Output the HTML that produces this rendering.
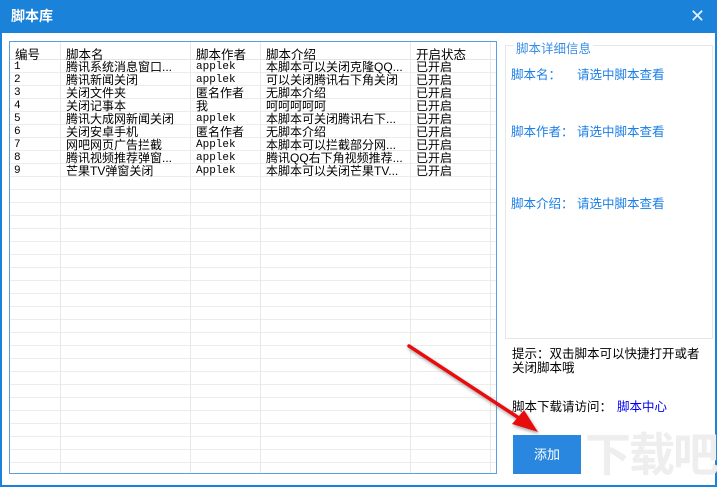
<!DOCTYPE html>
<html><head><meta charset="utf-8"><style>
*{margin:0;padding:0;box-sizing:border-box}
body{width:717px;height:487px;overflow:hidden;background:#fff;font-family:"Liberation Sans","Noto Sans CJK SC",sans-serif;position:relative}
.title{position:absolute;left:0;top:0;width:717px;height:33px;background:#1a82d9;color:#fff;font-size:14px;font-weight:bold;line-height:33px;padding-left:11px}
.close{position:absolute;right:12px;top:8px;color:#e6f0fa;font-size:18px;line-height:16px}
.lb{position:absolute;left:0;top:33px;width:2px;height:454px;background:#1a82d9}
.rb{position:absolute;right:0;top:33px;width:2px;height:454px;background:#1a82d9}
.bb{position:absolute;left:0;top:485px;width:717px;height:2px;background:#1a82d9}
.tbl{position:absolute;left:9px;top:41px;width:488px;height:433px;border:1px solid #5a9fe6;overflow:hidden;
 background-image:repeating-linear-gradient(to bottom,transparent 0,transparent 12px,#ececec 12px,#ececec 13px);background-position:0 5px}
.hdr{position:absolute;left:0;top:0;width:100%;height:18px;background:#fff;border-bottom:1px solid #e4e4e4}
.vl{position:absolute;top:0;width:1px;height:433px;background:#e8e8e8}
.r{position:absolute;left:0;width:100%;height:13px}
.c{position:absolute;top:0;font-size:12px;line-height:13px;color:#000;white-space:nowrap}
.h{top:2px;font-size:12.5px;position:absolute}
.m{font-family:"Liberation Mono","Noto Sans CJK SC",monospace;font-size:11px}
.grp{position:absolute;left:505px;top:45px;width:208px;height:294px;border:1px solid #e6e6e6}
.gt{position:absolute;left:514px;top:38px;background:#fff;color:#3a8ee6;font-size:12.5px;padding:0 2px}
.bl{position:absolute;color:#1a7fe6;font-size:12.5px}
.k{position:absolute;color:#000;font-size:12.5px;line-height:14px}
.btn{position:absolute;left:513px;top:435px;width:68px;height:39px;background:#2a87e0;color:#fff;font-size:13px;text-align:center;line-height:39px}
</style></head><body>
<div class="title">脚本库</div>
<div class="close">✕</div>
<div class="lb"></div><div class="rb"></div><div class="bb"></div>
<div class="tbl">
<div class="hdr"></div>
<div class="vl" style="left:50px"></div>
<div class="vl" style="left:180px"></div>
<div class="vl" style="left:250px"></div>
<div class="vl" style="left:400px"></div>
<div class="vl" style="left:480px"></div>
<div class="h" style="left:5px">编号</div>
<div class="h" style="left:56px">脚本名</div>
<div class="h" style="left:186px">脚本作者</div>
<div class="h" style="left:256px">脚本介绍</div>
<div class="h" style="left:406px">开启状态</div>

<div class="r" style="top:19px"><div class="c m" style="left:4px">1</div><div class="c" style="left:56px">腾讯系统消息窗口...</div><div class="c m" style="left:186px">applek</div><div class="c" style="left:256px">本脚本可以关闭克隆QQ...</div><div class="c" style="left:406px">已开启</div></div>
<div class="r" style="top:32px"><div class="c m" style="left:4px">2</div><div class="c" style="left:56px">腾讯新闻关闭</div><div class="c m" style="left:186px">applek</div><div class="c" style="left:256px">可以关闭腾讯右下角关闭</div><div class="c" style="left:406px">已开启</div></div>
<div class="r" style="top:45px"><div class="c m" style="left:4px">3</div><div class="c" style="left:56px">关闭文件夹</div><div class="c" style="left:186px">匿名作者</div><div class="c" style="left:256px">无脚本介绍</div><div class="c" style="left:406px">已开启</div></div>
<div class="r" style="top:58px"><div class="c m" style="left:4px">4</div><div class="c" style="left:56px">关闭记事本</div><div class="c" style="left:186px">我</div><div class="c" style="left:256px">呵呵呵呵呵</div><div class="c" style="left:406px">已开启</div></div>
<div class="r" style="top:71px"><div class="c m" style="left:4px">5</div><div class="c" style="left:56px">腾讯大成网新闻关闭</div><div class="c m" style="left:186px">applek</div><div class="c" style="left:256px">本脚本可关闭腾讯右下...</div><div class="c" style="left:406px">已开启</div></div>
<div class="r" style="top:84px"><div class="c m" style="left:4px">6</div><div class="c" style="left:56px">关闭安卓手机</div><div class="c" style="left:186px">匿名作者</div><div class="c" style="left:256px">无脚本介绍</div><div class="c" style="left:406px">已开启</div></div>
<div class="r" style="top:97px"><div class="c m" style="left:4px">7</div><div class="c" style="left:56px">网吧网页广告拦截</div><div class="c m" style="left:186px">Applek</div><div class="c" style="left:256px">本脚本可以拦截部分网...</div><div class="c" style="left:406px">已开启</div></div>
<div class="r" style="top:110px"><div class="c m" style="left:4px">8</div><div class="c" style="left:56px">腾讯视频推荐弹窗...</div><div class="c m" style="left:186px">applek</div><div class="c" style="left:256px">腾讯QQ右下角视频推荐...</div><div class="c" style="left:406px">已开启</div></div>
<div class="r" style="top:123px"><div class="c m" style="left:4px">9</div><div class="c" style="left:56px">芒果TV弹窗关闭</div><div class="c m" style="left:186px">Applek</div><div class="c" style="left:256px">本脚本可以关闭芒果TV...</div><div class="c" style="left:406px">已开启</div></div>
</div>
<div class="grp"></div>
<div class="gt">脚本详细信息</div>
<div class="bl" style="left:511px;top:64px">脚本名：</div><div class="bl" style="left:577px;top:64px">请选中脚本查看</div>
<div class="bl" style="left:511px;top:121px">脚本作者：</div><div class="bl" style="left:577px;top:121px">请选中脚本查看</div>
<div class="bl" style="left:511px;top:193px">脚本介绍：</div><div class="bl" style="left:577px;top:193px">请选中脚本查看</div>
<div class="k" style="left:512px;top:347px;width:200px">提示：双击脚本可以快捷打开或者<br>关闭脚本哦</div>
<div class="k" style="left:512px;top:400px">脚本下载请访问：</div>
<div class="k" style="left:617px;top:400px;color:#0000ee">脚本中心</div>
<div class="btn">添加</div>
<div style="position:absolute;left:585px;top:432px;font-size:46px;color:#eee;font-weight:bold;line-height:46px;letter-spacing:-2px">下载吧</div>
<svg style="position:absolute;left:0;top:0" width="717" height="487">
<defs><filter id="s"><feDropShadow dx="1" dy="2" stdDeviation="1.5" flood-color="#666" flood-opacity="0.6"/></filter></defs>
<g filter="url(#s)">
<line x1="409" y1="346" x2="522" y2="420" stroke="#e81010" stroke-width="3.5" stroke-linecap="round"/>
<polygon points="538,432 512,424 524,410" fill="#e81010"/>
</g>
</svg>
</body></html>
